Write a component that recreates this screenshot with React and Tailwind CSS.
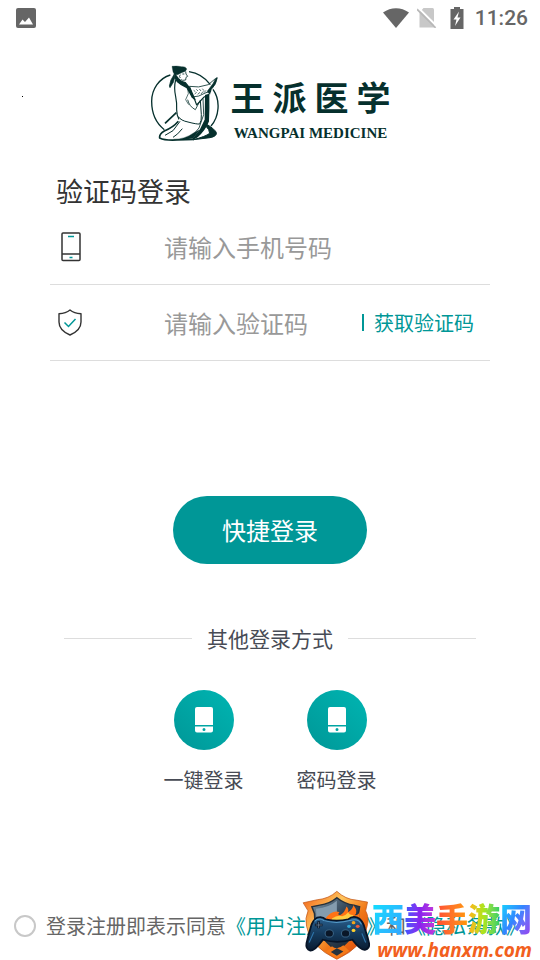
import React, { useState } from 'react'

const loginWays = [
  { id: 'oneKey', label: '一键登录' },
  { id: 'password', label: '密码登录' },
]

function StatusBar() {
  return (
    <div className="flex h-9 items-center justify-between px-3 text-[#666666]">
      <svg className="ml-1 size-5" viewBox="0 0 20 20" aria-hidden="true">
        <rect width="20" height="20" rx="2" fill="#666" />
        <path d="M3 16.500 6.500 11.500 9 14 13 9.500 17 16.500Z" fill="#fff" />
      </svg>
      <div className="flex items-center">
        <svg className="h-5 w-[26px]" viewBox="0 0 26 20" aria-hidden="true">
          <path d="M0 4.500C8 -1.200 18 -1.200 26 4.500L13 20Z" fill="#666" />
        </svg>
        <svg className="ml-2 h-5 w-5" viewBox="0 0 20 20" aria-hidden="true">
          <path d="M6.500 0H15.500q1.500 0 1.500 1.500V19.500H2.500V4.500Z" fill="#c8c8c8" />
          <path d="M1.500 0 20 18.500" stroke="#fff" strokeWidth="2" />
          <path d="M0 1.200 18.600 19.800" stroke="#b8b8b8" strokeWidth="1.700" />
        </svg>
        <svg className="ml-3 h-[22px] w-4" viewBox="0 0 16 22" aria-hidden="true">
          <path d="M5 0h6v2h3.500v20h-13V2H5Z" fill="#666" />
          <path d="M10 4.500 4.500 12.500H7.500L6 19 11.500 10.500H8.500Z" fill="#fff" />
        </svg>
        <span className="ml-2.5 font-['Roboto',sans-serif] text-[21px] font-medium leading-6">11:26</span>
      </div>
    </div>
  )
}

function Scholar() {
  return (
    <svg className="h-[76px] w-[69px] flex-shrink-0" viewBox="15 15 207 228" fill="none" stroke="#06302d" strokeLinejoin="round" aria-hidden="true">
      {/* ring, open where the figure stands */}
      <path d="M76 45C42 55 20 88 20 124C20 164 36 192 58 209" strokeWidth="4" />
      <path d="M132 35C160 39 181 54 196 74M204 88C228 122 222 171 198 198" strokeWidth="4" />
      {/* hat and head */}
      <path d="M81 19Q96 17 110 20Q124 19 125 28Q122 36 110 38L98 44Q87 46 84 35Z" fill="#06302d" strokeWidth="1" />
      <path d="M88 42Q91 54 85 67L75 83L73 78Q75 60 88 42Z" fill="#06302d" strokeWidth="2" />
      <path d="M122 34L123 42L128 49L123 52L122 60L113 61L109 58" strokeWidth="2.500" />
      <path d="M112 42h6M106 44q-5 5 0 10" strokeWidth="2.500" />
      {/* collar */}
      <path d="M90 43L100 56Q108 65 121 68L136 87L150 119L141 110L126 83L108 73Q95 66 90 54Z" fill="#06302d" strokeWidth="4" />
      {/* back and sleeve */}
      <path d="M92 60Q86 82 92 110Q96 128 95 150Q95 166 102 178" strokeWidth="3.500" />
      <path d="M60 190L94 158" strokeWidth="5" />
      <path d="M100 170Q108 182 129 186Q155 193 164 192Q170 184 169 164L166 120" strokeWidth="3" />
      <path d="M128 119Q133 140 151 149L158 136L165 122" strokeWidth="2.500" />
      <path d="M149 119L155 135L176 112L192 104" strokeWidth="3.500" />
      <path d="M128 84L130 101L122 119L131 134" strokeWidth="2" />
      {/* scroll */}
      <path d="M133 79Q160 85 190 74L211 56M140 111Q160 112 183 98L198 94" strokeWidth="2.500" />
      <path d="M134 79L143 111" strokeWidth="2.500" />
      <path d="M217 53Q214 74 199 88L194 103L187 94L204 71L213 54Z" fill="#06302d" strokeWidth="2" />
      <path d="M146 91l5 4m3-7l5 5m4-6l5 6m4-7l5 6M149 102l6-5m3 6l7-6m3 5l7-8m2 4l6-7" strokeWidth="2" />
      {/* robe folds */}
      <path d="M182 106L191 104Q192 145 190 184Q180 210 156 231L145 237L166 210L181 179Z" fill="#06302d" strokeWidth="4" />
      <path d="M174 115L176 164L162 204L137 233" strokeWidth="2.500" />
      <path d="M100 184Q84 203 58 213Q42 222 44 234Q60 242 96 240L147 238" strokeWidth="5" />
      <path d="M105 184L84 212L60 226M112 206Q98 224 84 232" strokeWidth="3" />
      <path d="M86 238Q119 238 147 218L163 210L145 235Q115 241 86 238Z" fill="#06302d" strokeWidth="1" />
      <path d="M187 194Q211 209 214 218Q216 229 195 233L145 239Q181 230 194 220Q193 208 184 200Z" fill="#06302d" strokeWidth="3" />
    </svg>
  )
}

function Brand() {
  return (
    <header className="relative flex items-start justify-center gap-3 pt-[29px] text-[#06302d]">
      <span className="absolute left-[22px] top-[60px] size-px bg-black" />
      <Scholar />
      <div className="flex w-40 flex-col pt-2">
        <div className="flex justify-between font-['Noto_Sans_CJK_SC',sans-serif] text-[34px] font-bold leading-[48px]">
          <span>王</span><span>派</span><span>医</span><span>学</span>
        </div>
        <span className="whitespace-nowrap text-center font-['Liberation_Serif',serif] text-[15px] font-bold leading-6">WANGPAI MEDICINE</span>
      </div>
    </header>
  )
}

function PhoneOutline() {
  return (
    <svg className="h-[30px] w-5" viewBox="0 0 20 30" fill="none" aria-hidden="true">
      <rect x="1" y="1" width="18" height="27.500" rx="1" stroke="#333" strokeWidth="1.500" />
      <path d="M1 22H19" stroke="#333" strokeWidth="1.500" />
      <path d="M7 4.500H13M8.500 25.500H11.500" stroke="#009797" strokeWidth="1.500" />
    </svg>
  )
}

function ShieldOutline() {
  return (
    <svg className="h-[27px] w-6" viewBox="0 0 24 27" fill="none" aria-hidden="true">
      <path d="M12 1C9 3.500 5 4.500 1 4.700V13C1 19 5 23 12 26C19 23 23 19 23 13V4.700C19 4.500 15 3.500 12 1Z" stroke="#333" strokeWidth="1.400" strokeLinejoin="round" />
      <path d="M6.500 13.500L10.500 17.500L17.500 10" stroke="#009797" strokeWidth="1.500" />
    </svg>
  )
}

function PhoneSolid() {
  return (
    <svg className="h-[26px] w-5" viewBox="0 0 20 26" fill="#fff" aria-hidden="true">
      <path d="M3 0H17Q19 0 19 2V18H1V2Q1 0 3 0Z" />
      <path fillRule="evenodd" d="M1 19.500H19V23.500Q19 25.500 17 25.500H3Q1 25.500 1 23.500ZM10 20.900A1.500 1.500 0 1 0 10 23.900A1.500 1.500 0 1 0 10 20.900Z" />
    </svg>
  )
}

function Badge() {
  return (
    <svg className="h-[70px] w-[72px] flex-shrink-0" viewBox="15 10 190 208" preserveAspectRatio="none" aria-hidden="true">
      <defs>
        <linearGradient id="rim" x1="0" y1="0" x2="1" y2="1">
          <stop offset="0" stopColor="#f05a12" />
          <stop offset="0.350" stopColor="#ffc45c" />
          <stop offset="0.600" stopColor="#f07818" />
          <stop offset="1" stopColor="#d93c08" />
        </linearGradient>
        <linearGradient id="steel" x1="0" y1="0" x2="1" y2="1">
          <stop offset="0" stopColor="#7e97a8" />
          <stop offset="0.450" stopColor="#34485a" />
          <stop offset="1" stopColor="#111c29" />
        </linearGradient>
        <linearGradient id="pad" x1="0" y1="0" x2="0" y2="1">
          <stop offset="0" stopColor="#2b6190" />
          <stop offset="0.500" stopColor="#153a5c" />
          <stop offset="1" stopColor="#091b31" />
        </linearGradient>
      </defs>
      <path d="M107 14Q130 38 158 40L188 46L183 72Q193 92 187 118Q179 178 107 216Q36 178 27 118Q22 94 31 72L18 48L55 39Q86 36 107 14Z" fill="url(#rim)" stroke="#c2571a" strokeWidth="2" />
      <path d="M107 33Q128 52 152 55L167 60L164 80Q168 142 107 191Q47 142 48 80L41 60L62 55Q88 51 107 33Z" fill="url(#steel)" stroke="#25303b" strokeWidth="4" />
      <path d="M107 42L107 95L53 95L52 66Q87 62 107 42Z" fill="#849cae" />
      <path d="M76 96Q95 68 114 76Q107 83 115 85Q129 76 132 59Q140 67 136 76Q147 70 151 55Q165 76 153 85Q164 87 167 74L164 116L84 110Z" fill="#ff7315" />
      <path d="M94 95Q109 83 121 88Q132 84 137 76Q140 85 150 84L152 104L94 106Z" fill="#ffce42" />
      <path d="M107 214L78 194L94 177Q107 190 124 174L140 191Z" fill="#f47a19" />
      <path d="M107 205L91 194L107 183L124 193Z" fill="#23323f" />
      <path d="M55 92Q69 87 77 97Q107 105 137 97Q148 86 161 92Q176 100 181 125Q189 151 192 169Q194 184 181 188Q170 190 148 158Q107 170 70 158Q49 191 37 190Q24 186 27 168Q32 143 38 121Q42 101 55 92Z" fill="url(#pad)" stroke="#071427" strokeWidth="5" />
      <path d="M48 103Q60 91 73 101Q107 112 144 100Q164 93 172 112" fill="none" stroke="#559bc8" strokeWidth="3" />
      <path d="M59 103V124M49 114H69" stroke="#0b1727" strokeWidth="7" />
      <path d="M59 105V123M51 114H68" stroke="#718ba3" strokeWidth="2" />
      <circle cx="87" cy="139" r="11" fill="#0a1728" stroke="#376183" strokeWidth="3" />
      <circle cx="130" cy="139" r="11" fill="#0a1728" stroke="#376183" strokeWidth="3" />
      <circle cx="139" cy="118" r="5" fill="#2fa6d5" />
      <circle cx="151" cy="107" r="5" fill="#f2a51c" />
      <circle cx="162" cy="118" r="5" fill="#f05a38" />
      <circle cx="151" cy="130" r="5" fill="#ffd02e" />
      <path d="M34 166L46 135M183 166L173 139" stroke="#2f75ab" strokeWidth="3" />
    </svg>
  )
}

function SiteMark() {
  return (
    <div className="pointer-events-none absolute bottom-0 right-2 flex items-end">
      <Badge />
      <div className="-ml-0.5 flex flex-col items-end">
        <div className="flex font-['Noto_Sans_CJK_SC',sans-serif] text-[32px] font-black leading-[46px] text-transparent">
          <span className="bg-linear-to-br from-[#00e5ff] to-[#349fff] bg-clip-text">西</span>
          <span className="bg-linear-to-r from-[#3155ff] via-[#8a22ee] to-[#c838d8] bg-clip-text">美</span>
          <span className="bg-linear-to-r from-[#ff4b35] to-[#ff9800] bg-clip-text">手</span>
          <span className="bg-linear-to-r from-[#ffb01b] via-[#a8e51d] to-[#20cf65] bg-clip-text">游</span>
          <span className="bg-linear-to-br from-[#00eaff] via-[#3384ff] to-[#9b29ed] bg-clip-text">网</span>
        </div>
        <span className="font-['Open_Sans',sans-serif] text-[19px] font-bold italic leading-5 text-[#f2601d]">www.hanxm.com</span>
      </div>
    </div>
  )
}

function App() {
  const [phone, setPhone] = useState('')
  const [code, setCode] = useState('')
  const [agreed, setAgreed] = useState(false)

  return (
    <div className="relative flex min-h-screen flex-col overflow-hidden bg-white font-['Noto_Sans_CJK_SC',sans-serif]">
      <StatusBar />
      <Brand />

      <form className="mt-7 flex flex-col px-[50px]" onSubmit={(e) => e.preventDefault()}>
        <h1 className="px-1.5 text-[27px] leading-9 text-[#333333]">验证码登录</h1>

        {/* Phone number */}
        <div className="flex h-[76px] items-center border-b border-[#dddddd]">
          <label htmlFor="phone" className="flex w-[114px] flex-shrink-0 pl-[11px]"><PhoneOutline /></label>
          <input
            id="phone"
            type="tel"
            aria-label="手机号码"
            value={phone}
            onChange={(e) => setPhone(e.target.value)}
            placeholder="请输入手机号码"
            className="min-w-0 flex-1 text-2xl text-[#333333] outline-none placeholder:text-[#999999]"
          />
        </div>

        {/* Verification code */}
        <div className="flex h-[76px] items-center border-b border-[#dddddd]">
          <label htmlFor="code" className="flex w-[114px] flex-shrink-0 pl-2"><ShieldOutline /></label>
          <input
            id="code"
            type="text"
            aria-label="验证码"
            value={code}
            onChange={(e) => setCode(e.target.value)}
            placeholder="请输入验证码"
            className="min-w-0 flex-1 text-2xl text-[#333333] outline-none placeholder:text-[#999999]"
          />
          <button type="button" className="mr-4 flex flex-shrink-0 items-center gap-2.5 text-xl text-[#009797]">
            <span className="h-[17px] w-0.5 bg-[#009797]" />
            获取验证码
          </button>
        </div>

        <button type="submit" className="mt-[135px] self-center rounded-full bg-[#009797] px-[49px] py-4 text-2xl leading-9 text-white">
          快捷登录
        </button>
      </form>

      <section className="mt-[58px] px-16">
        <div className="flex items-center gap-[15px]">
          <span className="h-px flex-1 bg-[#dddddd]" />
          <h2 className="text-[21px] leading-8 text-[#474b55]">其他登录方式</h2>
          <span className="h-px flex-1 bg-[#dddddd]" />
        </div>
        <div className="mt-9 flex justify-center gap-[53px]">
          {loginWays.map(way => (
            <button key={way.id} type="button" className="flex flex-col items-center gap-3.5 text-xl leading-8 text-[#474b55]">
              <span className="flex size-[60px] items-center justify-center rounded-full bg-linear-to-tr from-[#009797] to-[#00b5b2]">
                <PhoneSolid />
              </span>
              {way.label}
            </button>
          ))}
        </div>
      </section>

      <footer className="mt-auto flex items-center px-3.5 pb-5 text-xl leading-7 text-[#666666]">
        <input
          id="agree"
          type="checkbox"
          checked={agreed}
          onChange={(e) => setAgreed(e.target.checked)}
          className="mr-2.5 size-[22px] flex-shrink-0 appearance-none rounded-full border-2 border-[#c8c8c8] checked:bg-[#009797]"
        />
        <p className="whitespace-nowrap">
          <label htmlFor="agree">登录注册即表示同意</label>
          <a href="#agreement" className="text-[#009797]">《用户注册协议》</a>
          和
          <a href="#privacy" className="text-[#009797]">《隐私条款》</a>
        </p>
      </footer>

      <SiteMark />
    </div>
  )
}

export default App
